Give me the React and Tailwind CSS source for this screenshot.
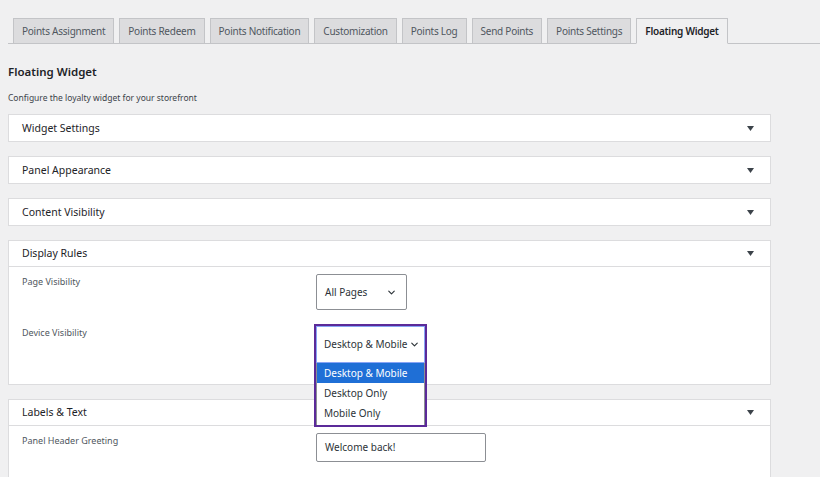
import { ChevronDown } from 'lucide-react';

const tabs = [
  'Points Assignment',
  'Points Redeem',
  'Points Notification',
  'Customization',
  'Points Log',
  'Send Points',
  'Points Settings',
  'Floating Widget',
];

function Caret() {
  return (
    <svg width="7" height="5" viewBox="0 0 7 5" className="text-[#3c434a]">
      <polygon points="0,0 7,0 3.5,5" fill="currentColor" />
    </svg>
  );
}

function PanelHeader({ title, open }) {
  return (
    <div
      className={`h-[26px] flex items-center justify-between pl-[13px] pr-[16px] ${
        open ? 'border-b border-[#dcdcde]' : ''
      }`}
    >
      <span className="pt-[1px] text-[10.5px] text-[#1d2327]">{title}</span>
      <Caret />
    </div>
  );
}

function Panel({ title, open, children }) {
  return (
    <div className="w-[763px] bg-white border border-[#dcdcde] mb-[14px]">
      <PanelHeader title={title} open={open} />
      {open && children}
    </div>
  );
}

export default function App() {
  return (
    <div className="min-h-screen bg-[#f0f0f1] pt-[18px] font-['Noto_Sans',sans-serif] overflow-hidden">
      <nav className="ml-[8px] pl-[5px] flex gap-[5px] border-b border-[#c3c4c7]">
        {tabs.map((t) => {
          const active = t === 'Floating Widget';
          return (
            <div
              key={t}
              className={`h-[26px] -mb-px px-[8px] flex items-center border border-[#c3c4c7] text-[10px] tracking-[-0.25px] ${
                active
                  ? 'bg-[#f0f0f1] border-b-[#f0f0f1] text-[#1d2327] font-semibold'
                  : 'bg-[#dcdcde] text-[#50575e]'
              }`}
            >
              {t}
            </div>
          );
        })}
      </nav>

      <main className="px-[8px]">
        <h2 className="mt-[19px] text-[11.5px] leading-[18px] font-semibold text-[#1d2327]">
          Floating Widget
        </h2>
        <p className="mt-[10px] text-[8.5px] leading-[14px] text-[#3c434a]">
          Configure the loyalty widget for your storefront
        </p>

        <div className="mt-[9px]">
          <Panel title="Widget Settings" />
          <Panel title="Panel Appearance" />
          <Panel title="Content Visibility" />

          <Panel title="Display Rules" open>
            <div className="pl-[13px] pt-[7px] pb-[22px] grid grid-cols-[294px_1fr] gap-y-[14px]">
              <div className="pt-[1px] text-[9px] leading-[14px] text-[#50575e]">Page Visibility</div>
              <div className="w-[91px] h-[36px] border border-[#8c8f94] rounded-[2px] flex items-center justify-between pl-[8px] pr-[9px] text-[10px] text-[#2c3338]">
                <span>All Pages</span>
                <ChevronDown size={11} strokeWidth={2.5} />
              </div>

              <div className="pt-[2px] text-[9px] leading-[14px] text-[#50575e]">Device Visibility</div>
              <div className="relative h-[38px] -ml-[2px]">
                <div className="absolute top-0 left-0 z-10 w-[113px] border-2 border-[#5b2a99] bg-white">
                  <div className="h-[37px] border border-[#88a4f5] flex items-center pl-[7px] text-[10px] text-[#2c3338]">
                    <span>Desktop &amp; Mobile</span>
                    <ChevronDown size={11} strokeWidth={2.5} className="ml-[2px]" />
                  </div>
                  <div className="border-x border-[#8c8f94] pb-[2px] text-[10px] text-[#2c3338]">
                    <div className="h-[20px] flex items-center pl-[7px] bg-[#1f6fd6] text-white">Desktop &amp; Mobile</div>
                    <div className="h-[20px] flex items-center pl-[7px]">Desktop Only</div>
                    <div className="h-[20px] flex items-center pl-[7px]">Mobile Only</div>
                  </div>
                </div>
              </div>
            </div>
          </Panel>

          <Panel title="Labels & Text" open>
            <div className="pl-[13px] pt-[7px] pb-[20px] grid grid-cols-[294px_1fr]">
              <div className="pt-[1px] text-[9px] leading-[14px] text-[#50575e]">Panel Header Greeting</div>
              <div className="w-[170px] h-[29px] border border-[#8c8f94] rounded-[2px] flex items-center pl-[8px] text-[10px] text-[#2c3338]">
                Welcome back!
              </div>
            </div>
          </Panel>
        </div>
      </main>
    </div>
  );
}
